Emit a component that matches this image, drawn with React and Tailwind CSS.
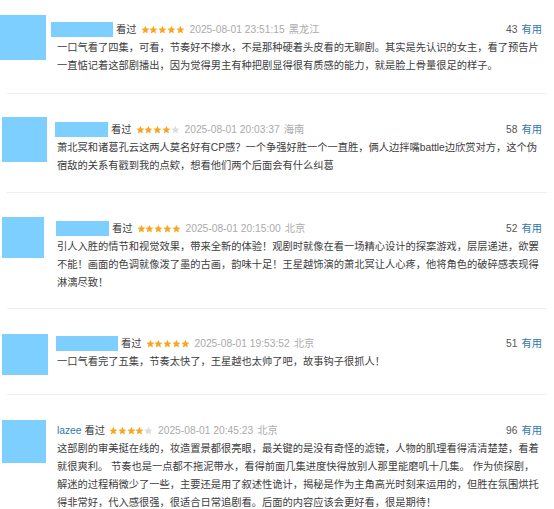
const reviews = [
  {
    pad: "pt-[20px] pb-[18px]",
    avatar: "ml-0 w-[46px] h-[45px] -mt-[5px]",
    name: "-ml-[6px] w-[62px] h-[15px]",
    stars: 5,
    time: "2025-08-01 23:51:15",
    place: "黑龙江",
    votes: 43,
    lines: [
      "一口气看了四集，可看，节奏好不掺水，不是那种硬着头皮看的无聊剧。其实是先认识的女主，看了预告片",
      "一直惦记着这部剧播出，因为觉得男主有种把剧显得很有质感的能力，就是脸上骨量很足的样子。",
    ],
  },
  {
    pad: "pt-[26px] pb-[17px]",
    avatar: "ml-[2px] w-[45px] h-[45px] -mt-[3px]",
    name: "-ml-[2px] w-[53px] h-[15px]",
    stars: 4,
    time: "2025-08-01 20:03:37",
    place: "海南",
    votes: 58,
    lines: [
      "萧北冥和诸葛孔云这两人莫名好有CP感？一个争强好胜一个一直胜，俩人边拌嘴battle边欣赏对方，这个伪",
      "宿敌的关系有戳到我的点欸，想看他们两个后面会有什么纠葛",
    ],
  },
  {
    pad: "pt-[26px] pb-[16px]",
    avatar: "ml-[2px] w-[42px] h-[41px] -mt-[2px]",
    name: "-ml-[1px] w-[53px] h-[15px]",
    stars: 5,
    time: "2025-08-01 20:15:00",
    place: "北京",
    votes: 52,
    lines: [
      "引人入胜的情节和视觉效果，带来全新的体验！观剧时就像在看一场精心设计的探案游戏，层层递进，欲罢",
      "不能！画面的色调就像泼了墨的古画，韵味十足！王星越饰演的萧北冥让人心疼，他将角色的破碎感表现得",
      "淋漓尽致！",
    ],
  },
  {
    pad: "pt-[25px] pb-[19px]",
    avatar: "ml-[2px] w-[46px] h-[41px] mt-0",
    name: "-ml-[1px] w-[62px] h-[15px]",
    stars: 5,
    time: "2025-08-01 19:53:52",
    place: "北京",
    votes: 51,
    lines: ["一口气看完了五集，节奏太快了，王星越也太帅了吧，故事钩子很抓人！"],
  },
  {
    pad: "pt-[26px] pb-[6px]",
    avatar: "ml-[2px] w-[44px] h-[43px] -mt-[1px]",
    user: "lazee",
    stars: 4,
    time: "2025-08-01 20:45:23",
    place: "北京",
    votes: 96,
    lines: [
      "这部剧的审美挺在线的，妆造置景都很亮眼，最关键的是没有奇怪的滤镜，人物的肌理看得清清楚楚，看着",
      "就很爽利。 节奏也是一点都不拖泥带水，看得前面几集进度快得放别人那里能磨叽十几集。 作为侦探剧，",
      "解迷的过程稍微少了一些，主要还是用了叙述性诡计，揭秘是作为主角高光时刻来运用的，但胜在氛围烘托",
      "得非常好，代入感很强，很适合日常追剧看。后面的内容应该会更好看，很是期待！",
    ],
  },
];

function Stars({ n }) {
  return (
    <span className="flex items-center ml-[4px]">
      {[0, 1, 2, 3, 4].map((i) => (
        <svg key={i} width="8.8" height="9.5" viewBox="0 0 24 24">
          <path
            d="M12 1l3.2 7.3 7.9.7-6 5.2 1.8 7.8L12 18l-6.9 4 1.8-7.8-6-5.2 7.9-.7z"
            fill={i < n ? "#f5a623" : "#dcdcdc"}
          />
        </svg>
      ))}
    </span>
  );
}

export default function App() {
  return (
    <div
      className="w-[554px] h-[509px] overflow-hidden bg-white text-[10.25px] text-[#3d3d3d]"
      style={{ fontFamily: '"Liberation Sans", "Noto Sans CJK SC", sans-serif' }}
    >
      {reviews.map((r, idx) => (
        <div key={idx}>
          <div className={`flex items-start ${r.pad}`}>
            {/* Avatar column */}
            <div className="shrink-0 w-[57px]">
              <div className={`bg-[#7dcfff] ${r.avatar}`} />
            </div>
            <div className="flex-1 min-w-0 flex flex-col mr-[12px]">
              {/* Header */}
              <div className="flex items-center h-[19px] leading-[19px] whitespace-nowrap">
                {r.user ? (
                  <span className="text-[#3377aa]">{r.user}</span>
                ) : (
                  <span className={`bg-[#7dcfff] ${r.name}`} />
                )}
                <span className="ml-[3px]">看过</span>
                <Stars n={r.stars} />
                <span className="ml-[5px] text-[#aaa]">{r.time}</span>
                <span className="ml-[4px] text-[#aaa]">{r.place}</span>
                <span className="ml-auto text-[#555]">{r.votes}</span>
                <span className="ml-[4px] text-[#3377aa]">有用</span>
              </div>
              {/* Body */}
              <div className="leading-[18px] whitespace-nowrap">
                {r.lines.map((l, i) => (
                  <div key={i}>{l}</div>
                ))}
              </div>
            </div>
          </div>
          {idx < reviews.length - 1 && <div className="mx-[7px] h-px bg-[#eeeeee]" />}
        </div>
      ))}
    </div>
  );
}
